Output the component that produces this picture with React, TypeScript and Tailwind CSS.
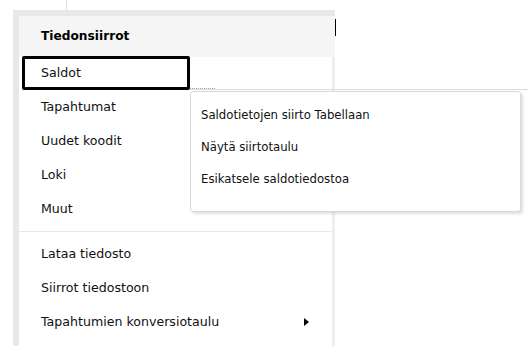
import React from 'react';

const MAIN_ITEMS = ['Tapahtumat', 'Uudet koodit', 'Loki', 'Muut'];
const FILE_ITEMS = ['Lataa tiedosto', 'Siirrot tiedostoon'];
const SUB_ITEMS = ['Saldotietojen siirto Tabellaan', 'Näytä siirtotaulu', 'Esikatsele saldotiedostoa'];

const App = () => {
  return (
    <div
      className="relative w-[528px] h-[346px] overflow-hidden bg-white text-[12.6px] text-[#111]"
      style={{ fontFamily: '"DejaVu Sans", Verdana, sans-serif' }}
    >
      {/* faint line above the panel */}
      <div className="absolute left-[66px] top-0 h-[10px] w-px bg-[#e2e2e2]" />

      <div className="ml-[13px] mt-[10px] w-[322px] h-[336px] border-l-[6px] border-t-[6px] border-[#e7e9e9] flex flex-col">
        {/* header */}
        <div className="relative h-[41px] shrink-0 bg-[#f5f5f5] flex items-center pl-[22px] font-bold text-[12.2px] text-black">
          Tiedonsiirrot
          <div className="absolute right-[-1px] top-[3px] h-[17px] w-[1px] bg-black" />
        </div>

        {/* body */}
        <div className="flex-1 flex flex-col border-r-[3px] border-[#efefef]">
          <div className="relative h-[34px] mt-[-1px] ml-[3px] w-[168px] border-[3px] border-black rounded-[2px] flex items-center pl-[16px]">
            Saldot
            <div className="absolute left-[165px] bottom-[-2px] w-[25px] border-t border-dotted border-[#9aa0a6]" />
          </div>
          {MAIN_ITEMS.map((item) => (
            <div key={item} className="h-[34px] flex items-center pl-[22px]">
              {item}
            </div>
          ))}
          <div className="my-[5px] h-px bg-[#e8e8e8]" />
          {FILE_ITEMS.map((item) => (
            <div key={item} className="h-[34px] flex items-center pl-[22px]">
              {item}
            </div>
          ))}
          <div className="h-[34px] flex items-center justify-between pl-[22px] pr-[23px]">
            <span>Tapahtumien konversiotaulu</span>
            <svg width="5" height="8" viewBox="0 0 5 8">
              <path d="M0 0 L5 4 L0 8 Z" fill="#000" />
            </svg>
          </div>
        </div>
      </div>

      {/* line behind the submenu */}
      <div className="absolute left-[190px] top-[89px] w-[338px] h-px bg-[#dcdcdc]" />

      {/* submenu popup */}
      <div className="absolute left-[190px] top-[91px] w-[331px] h-[121px] bg-white border border-[#d9d9d9] rounded-[3px] shadow-[2px_2px_3px_rgba(0,0,0,0.12)] flex flex-col pt-[8px] pl-[10px] text-[11.7px]">
        {SUB_ITEMS.map((item) => (
          <div key={item} className="h-[32px] flex items-center">
            {item}
          </div>
        ))}
      </div>
    </div>
  );
};

export default App;
